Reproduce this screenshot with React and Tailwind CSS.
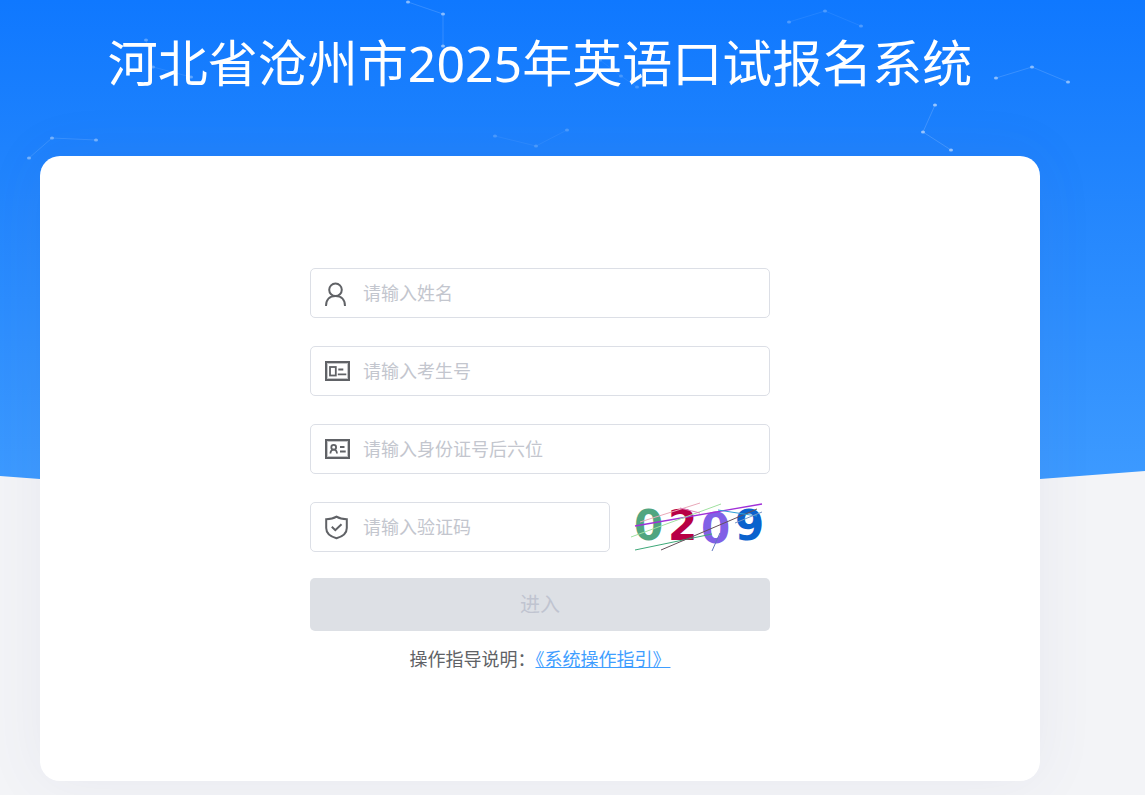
import React from "react";

function Constellations() {
  const groups = [
    { o: 0.5, p: [[408, 2], [443, 14], [443, 46]] },
    { o: 0.25, p: [[789, 22], [825, 11], [861, 26]] },
    { o: 0.5, p: [[996, 78], [1032, 67], [1068, 82]] },
    { o: 0.55, p: [[935, 105], [923, 132], [951, 150]] },
    { o: 0.4, p: [[29, 158], [52, 138], [96, 140]] },
    { o: 0.2, p: [[495, 136], [536, 146], [567, 130]] },
    { o: 0.3, p: [[146, 40], [153, 67], [191, 77]] },
    { o: 0.2, p: [[600, 60], [621, 76], [637, 87]] },
  ];
  return groups.map((g, i) => (
    <g key={i} opacity={g.o} fill="#fff">
      <polyline
        points={g.p.map((q) => q.join(",")).join(" ")}
        fill="none"
        stroke="#fff"
        strokeOpacity="0.3"
        strokeWidth="1"
      />
      {g.p.map(([x, y]) => (
        <ellipse key={x + "-" + y} cx={x} cy={y} rx="2" ry="1.5" />
      ))}
    </g>
  ));
}

function Backdrop() {
  return (
    <svg
      className="absolute inset-x-0 top-0 -z-10 h-[520px] w-full"
      viewBox="0 0 1145 520"
      preserveAspectRatio="none"
      aria-hidden="true"
    >
      <defs>
        <linearGradient id="sky" x1="0" y1="0" x2="0" y2="1">
          <stop offset="0" stopColor="#0f78ff" />
          <stop offset="0.3" stopColor="#1e82fd" />
          <stop offset="1" stopColor="#3e9bff" />
        </linearGradient>
      </defs>
      <path d="M0 0H1145V471L1040 479Q560 512 40 479L0 476Z" fill="url(#sky)" />
      <Constellations />
    </svg>
  );
}

const iconProps = {
  className: "h-[26px] w-[26px]",
  viewBox: "0 0 26 26",
  fill: "none",
  stroke: "#606266",
  strokeWidth: 2,
  "aria-hidden": true,
};

function UserIcon() {
  return (
    <svg {...iconProps}>
      <circle cx="10.5" cy="9.8" r="6.3" />
      <path d="M1 26C1 19.5 5 16 10.5 16S20 19.5 20 26" />
    </svg>
  );
}

function TicketIcon() {
  return (
    <svg {...iconProps}>
      <rect x="1" y="4" width="23" height="18" />
      <rect x="2.5" y="5.5" width="20" height="15" stroke="#c4c5c7" strokeWidth="1" />
      <rect x="5" y="9" width="5.8" height="8.5" strokeWidth="1.8" />
      <path d="M13.3 11.5H18.3M12.8 16.3H21.3" strokeWidth="1.8" />
    </svg>
  );
}

function IdCardIcon() {
  return (
    <svg {...iconProps}>
      <rect x="1" y="4" width="23" height="18" />
      <rect x="2.5" y="5.5" width="20" height="15" stroke="#c4c5c7" strokeWidth="1" />
      <circle cx="8.7" cy="11.2" r="2.4" strokeWidth="1.8" />
      <path d="M5.4 17.5C5.6 14.6 7 13.6 8.7 13.6S11.8 14.6 12 17.5" strokeWidth="1.8" />
      <path d="M15 11H19.5M15 15.5H20.7" strokeWidth="2" />
    </svg>
  );
}

function ShieldIcon() {
  return (
    <svg {...iconProps}>
      <path d="M11.5 2.6C8.5 4.6 5 5.2 1.2 5.2V14C1.2 19.5 5.5 22.6 11.5 24.2C17.5 22.6 21.8 19.5 21.8 14V5.2C18 5.2 14.5 4.6 11.5 2.6Z" />
      <path d="M6.8 12.8L10.3 16.2L16.5 10.2" />
    </svg>
  );
}

function Field({ id, label, children }) {
  return (
    <div className="flex h-[50px] min-w-0 flex-1 items-center gap-3 rounded-[5px] border border-[#dcdfe6] bg-white px-3.5">
      <label htmlFor={id} className="shrink-0">
        {children}
      </label>
      <input
        id={id}
        type="text"
        aria-label={label}
        placeholder={label}
        className="h-full min-w-0 flex-1 bg-transparent text-[18px] text-[#606266] outline-none placeholder:text-[#c3c6ce]"
      />
    </div>
  );
}

function Captcha() {
  return (
    <button type="button" aria-label="验证码" className="h-[50px] w-[140px] shrink-0">
      <svg viewBox="0 0 140 50" className="h-full w-full">
        <g fontFamily="DejaVu Sans" fontWeight="700" fontSize="42">
          <text x="4" y="38" fill="#50a580">0</text>
          <text x="38" y="38" fill="#b80045">2</text>
          <text x="71" y="41" fill="#8060e6">0</text>
          <text x="105" y="38" fill="#0a62cd">9</text>
        </g>
        <g strokeWidth="1" fill="none">
          <path d="M5 24L132 2" stroke="#a030d8" strokeWidth="1.3" />
          <path d="M5 48L82 32" stroke="#3da878" />
          <path d="M31 48L127 7" stroke="#65505a" />
          <path d="M1 35L91 2" stroke="#a0e0a0" />
          <path d="M10 20L70 1" stroke="#e8a8b8" />
          <path d="M50 6L70 11" stroke="#e080b8" />
          <path d="M88 8L127 14" stroke="#2fa0d8" />
          <path d="M105 21L132 10" stroke="#7896c8" />
          <path d="M82 49L90 31" stroke="#6078c0" />
        </g>
      </svg>
    </button>
  );
}

export default function App() {
  return (
    <div className="relative isolate min-h-screen overflow-hidden bg-[#f3f4f7] font-['Noto_Sans','Noto_Sans_CJK_SC',sans-serif]">
      <Backdrop />
      <main className="max-w-[1080px] px-10 pb-3.5">
        <h1 className="flex h-[156px] items-start justify-center pt-7 text-[50px] leading-[70px] whitespace-nowrap text-white">
          河北省沧州市2025年英语口试报名系统
        </h1>
        <section className="flex justify-center rounded-[20px] bg-white px-6 pt-28 pb-27 shadow-[0_0_60px_rgba(80,80,140,0.07)]">
          <form className="w-full max-w-[460px]" onSubmit={(e) => e.preventDefault()}>
            <div className="flex flex-col gap-7">
              <div className="flex">
                <Field id="name" label="请输入姓名"><UserIcon /></Field>
              </div>
              <div className="flex">
                <Field id="number" label="请输入考生号"><TicketIcon /></Field>
              </div>
              <div className="flex">
                <Field id="idcard" label="请输入身份证号后六位"><IdCardIcon /></Field>
              </div>
              <div className="flex gap-5">
                <Field id="code" label="请输入验证码"><ShieldIcon /></Field>
                <Captcha />
              </div>
            </div>
            <button
              type="submit"
              disabled
              className="mt-[26px] h-[53px] w-full rounded-[5px] bg-[#dde0e5] text-[20px] text-[#c0c4d0]"
            >
              进入
            </button>
            <p className="mt-3.5 text-center text-[18px] leading-7 whitespace-nowrap text-[#606266]">
              操作指导说明：
              <a href="#guide" className="text-[#409eff] underline">
                《系统操作指引》
              </a>
            </p>
          </form>
        </section>
      </main>
    </div>
  );
}
